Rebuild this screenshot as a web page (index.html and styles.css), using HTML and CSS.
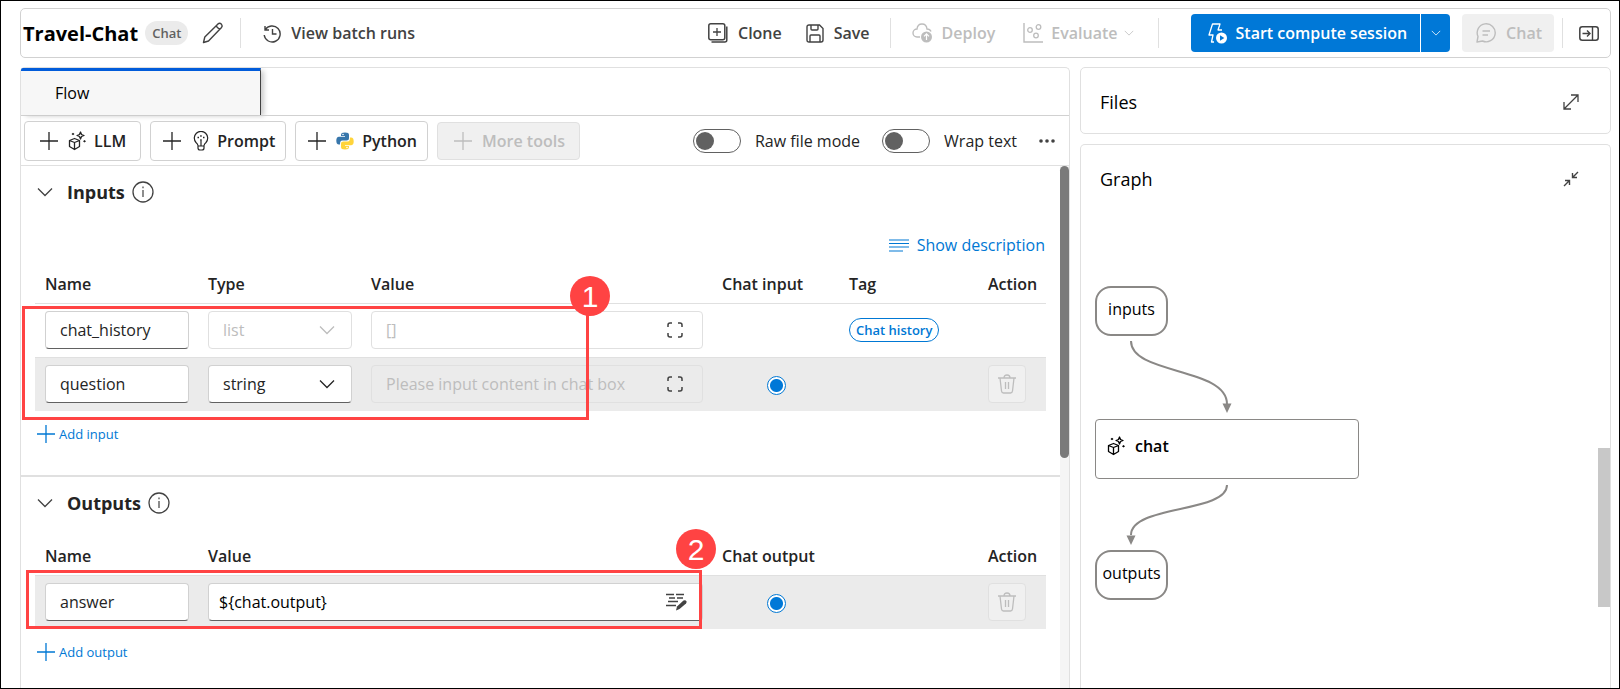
FILE: index.html
```html
<!DOCTYPE html>
<html lang="en">
<head>
<meta charset="utf-8">
<title>Travel-Chat</title>
<link rel="stylesheet" href="styles.css">
</head>
<body>
<svg class="defs" aria-hidden="true">
  <symbol id="plus" viewBox="0 0 18 18"><path d="M9 0v18M0 9h18" fill="none" stroke="currentColor" stroke-width="1.3"/></symbol>
  <symbol id="chevron" viewBox="0 0 16 10"><path d="M1 1.5l7 7 7-7" fill="none" stroke="currentColor" stroke-width="1.3"/></symbol>
  <symbol id="llm" viewBox="0 0 18 20"><g fill="none" stroke="currentColor" stroke-width="1.3" stroke-linejoin="round"><path d="M6.500 7.500l5 2v6l-5 3-5-3v-6zM1.500 9.500l5 2 5-2M6.500 11.500v7"/><path d="M12.500 1l1 2.500 2.500 1-2.500 1-1 2.500-1-2.500-2.500-1 2.500-1z"/></g><path d="M5 1.700l1.500 1.300L5 4.300 3.500 3zM16.500 9l1.500 1.300-1.500 1.300-1.500-1.300z" fill="currentColor"/></symbol>
  <symbol id="info" viewBox="0 0 22 22"><circle cx="11" cy="11" r="10" fill="none" stroke="currentColor" stroke-width="1.3"/><path d="M11 9v7M11 5.500v1.700" stroke="currentColor" stroke-width="1.200"/></symbol>
  <symbol id="expand" viewBox="0 0 16 16"><path d="M1 5V3q0-2 2-2h2M11 1h2q2 0 2 2v2M15 11v2q0 2-2 2h-2M5 15H3q-2 0-2-2v-2" fill="none" stroke="currentColor" stroke-width="1.500"/></symbol>
  <symbol id="trash" viewBox="0 0 20 20"><path d="M1 4h18M7 4q0-3 3-3t3 3M3 4l1.500 13q.3 2 2 2h7q1.700 0 2-2L17 4M8.500 8v7M11.500 8v7" fill="none" stroke="currentColor" stroke-width="1.300"/></symbol>
</svg>
<div class="page">
  <header class="topbar">
    <h1>Travel-Chat</h1>
    <span class="pill">Chat</span>
    <button class="ghost edit" aria-label="Rename"><svg width="22" height="22" viewBox="0 0 22 22"><path d="M1.500 20.500l1.300-5.500L16 1.900q1.700-1.300 3.300.2 1.500 1.700.2 3.300L6.500 19zM14 4l3.800 3.800" fill="none" stroke="currentColor" stroke-width="1.400" stroke-linejoin="round"/></svg></button>
    <i class="rule"></i>
    <button class="ghost history"><svg width="18" height="20" viewBox="0 0 18 20"><path d="M2 3v4h4M2.200 7A8 8 0 1 1 1.200 12M9.500 6v5h4" fill="none" stroke="currentColor" stroke-width="1.400"/></svg>View batch runs</button>
    <div class="actions">
      <button class="ghost"><svg width="20" height="20" viewBox="0 0 20 20"><rect x=".8" y=".8" width="16" height="16" rx="2" fill="none" stroke="currentColor" stroke-width="1.500"/><path d="M9 5v8M5 9h8" stroke="currentColor" stroke-width="1.300"/><path d="M18.800 3.500V17q0 2-2 2H3.500" fill="none" stroke="currentColor" stroke-width="1.500"/></svg>Clone</button>
      <button class="ghost save"><svg width="18" height="19" viewBox="0 0 18 19"><path d="M3 1h10.500L17 4.500V16q0 2-2 2H3q-2 0-2-2V3q0-2 2-2zM4 18v-6q0-1 1-1h8q1 0 1 1v6M5 1v4q0 1 1 1h5q1 0 1-1V1" fill="none" stroke="currentColor" stroke-width="1.400"/></svg>Save</button>
      <i class="rule"></i>
      <button class="ghost deploy" disabled><svg width="20" height="20" viewBox="0 0 20 20"><path d="M8 14H5a4 4 0 0 1 0-8Q5.500 1 10 1t5 5q3 0 4 2.500" fill="none" stroke="currentColor" stroke-width="1.400"/><circle cx="14.500" cy="14" r="5.500" fill="currentColor"/><path d="M14.500 17v-6M12 13.300l2.500-2.500 2.500 2.500" fill="none" stroke="#fff" stroke-width="1.200"/></svg>Deploy</button>
      <button class="ghost evaluate" disabled><svg width="20" height="20" viewBox="0 0 20 20"><path d="M1 0v19h19" fill="none" stroke="currentColor" stroke-width="1.400"/><g fill="none" stroke="currentColor" stroke-width="1.300"><circle cx="7" cy="7" r="2.300"/><circle cx="15.500" cy="4" r="2.300"/><circle cx="13" cy="12.500" r="2.300"/></g></svg>Evaluate<svg class="caret" width="10" height="6"><use href="#chevron"/></svg></button>
      <i class="rule"></i>
      <div class="split">
        <button class="start"><svg width="20" height="21" viewBox="0 0 20 21"><path d="M6 19H3.500L5 12H1L4.500 1H12l-2 6h4" fill="none" stroke="currentColor" stroke-width="1.300" stroke-linejoin="round"/><circle cx="13.500" cy="15" r="5.500" fill="currentColor"/><path d="M12 12.300v5.400l4.300-2.700z" fill="#0078d7"/></svg>Start compute session</button>
        <button class="more" aria-label="Session options"><svg width="10" height="6"><use href="#chevron"/></svg></button>
      </div>
      <button class="chat-button" disabled><svg width="20" height="20" viewBox="0 0 20 20"><path d="M1 19l1-5.500A9 9 0 1 1 6.500 18z" fill="none" stroke="currentColor" stroke-width="1.400" stroke-linejoin="round"/><path d="M6.500 8h7.500M6.500 12H12" stroke="currentColor" stroke-width="1.300"/></svg>Chat</button>
      <i class="rule"></i>
      <button class="ghost collapse" aria-label="Toggle panel"><svg width="20" height="15" viewBox="0 0 20 15"><rect x=".8" y=".8" width="18.400" height="13.400" rx="2.500" fill="none" stroke="currentColor" stroke-width="1.500"/><path d="M13.500 1v13M3.500 7.500h7M8 4.500l3 3-3 3" fill="none" stroke="currentColor" stroke-width="1.400"/></svg></button>
    </div>
  </header>
  <div class="columns">
    <main class="panel editor">
      <div class="tabs"><button class="tab">Flow</button></div>
      <div class="tools">
        <button class="tool tool-llm"><svg class="plus" width="18" height="18"><use href="#plus"/></svg><svg width="18" height="20"><use href="#llm"/></svg>LLM</button>
        <button class="tool"><svg class="plus" width="18" height="18"><use href="#plus"/></svg><svg class="bulb" width="16" height="20" viewBox="0 0 16 20"><path d="M5 14.500Q4.700 13 3 11.500A6.700 6.700 0 1 1 13 11.500Q11.300 13 11 14.500V17q0 2-2 2H7q-2 0-2-2zM5 15h6M8 9.500V15" fill="none" stroke="currentColor" stroke-width="1.200"/><path d="M4.500 6.500h1.500M7.200 5h1.500M10 6.500h1.500M7.200 9h1.500" stroke="currentColor" stroke-width="1.500"/></svg>Prompt</button>
        <button class="tool"><svg class="plus" width="18" height="18"><use href="#plus"/></svg><svg width="18" height="18" viewBox="0 0 18 18"><path d="M9 .5c3 0 4 .8 4 2.500v3c0 1.800-1 2.500-2.500 2.500h-4C4.500 8.500 4 10 4 12.500H3C1 12.500.3 11 .3 8.500S1.300 4.700 3 4.700h6V4H5V3C5 1.300 6 .5 9 .5z" fill="#3776ab"/><path d="M9 17.500c-3 0-4-.8-4-2.500v-3c0-1.800 1-2.500 2.500-2.500h4C13.500 9.500 14 8 14 5.500h1c2 0 2.700 1.500 2.700 4s-1 3.800-2.700 3.800H9v.7h4v1c0 1.700-1 2.500-4 2.500z" fill="#ffd43b"/><circle cx="7" cy="2.500" r=".8" fill="#fff"/><circle cx="11" cy="15.500" r=".8" fill="#fff"/></svg>Python</button>
        <button class="tool tool-more" disabled><svg class="plus" width="18" height="18"><use href="#plus"/></svg>More tools</button>
        <div class="view">
          <label><input type="checkbox" class="toggle">Raw file mode</label>
          <label><input type="checkbox" class="toggle">Wrap text</label>
          <button class="ghost" aria-label="More options"><svg width="16" height="4" viewBox="0 0 16 4"><g fill="currentColor"><circle cx="2" cy="2" r="1.800"/><circle cx="8" cy="2" r="1.800"/><circle cx="14" cy="2" r="1.800"/></g></svg></button>
        </div>
      </div>
      <div class="body">
        <div class="sections">
          <section>
            <h2><svg width="16" height="10"><use href="#chevron"/></svg>Inputs<svg class="info" width="22" height="22"><use href="#info"/></svg></h2>
            <div class="describe"><button class="link"><svg width="20" height="13" viewBox="0 0 20 13"><path d="M0 1h20M0 4.500h20M0 8h20M0 12h14" stroke="currentColor" stroke-width="1.200"/></svg>Show description</button></div>
            <table>
              <colgroup><col class="c-name"><col class="c-name"><col><col class="c-chat"><col class="c-tag"><col class="c-action"></colgroup>
              <thead><tr><th>Name</th><th>Type</th><th>Value</th><th>Chat input</th><th>Tag</th><th>Action</th></tr></thead>
              <tbody>
                <tr>
                  <td><input class="field" aria-label="Name" value="chat_history"></td>
                  <td><div class="select"><select class="field" aria-label="Type" disabled><option>list</option></select><svg width="16" height="10"><use href="#chevron"/></svg></div></td>
                  <td><div class="value"><input class="field" aria-label="Value" value="[]" disabled><button class="ghost" aria-label="Expand"><svg width="16" height="16"><use href="#expand"/></svg></button></div></td>
                  <td></td>
                  <td><span class="tag">Chat history</span></td>
                  <td></td>
                </tr>
                <tr class="shaded">
                  <td><input class="field" aria-label="Name" value="question"></td>
                  <td><div class="select"><select class="field" aria-label="Type"><option>string</option></select><svg width="16" height="10"><use href="#chevron"/></svg></div></td>
                  <td><div class="value"><input class="field" aria-label="Value" placeholder="Please input content in chat box" disabled><button class="ghost" aria-label="Expand"><svg width="16" height="16"><use href="#expand"/></svg></button></div></td>
                  <td class="center"><input type="radio" name="chat-input" aria-label="Chat input" checked></td>
                  <td></td>
                  <td><button class="delete" aria-label="Delete" disabled><svg width="20" height="20"><use href="#trash"/></svg></button></td>
                </tr>
              </tbody>
            </table>
            <button class="link add"><svg width="18" height="18"><use href="#plus"/></svg>Add input</button>
            <div class="callout callout-inputs"></div>
            <span class="badge badge-inputs">1</span>
          </section>
          <section>
            <h2><svg width="16" height="10"><use href="#chevron"/></svg>Outputs<svg class="info" width="22" height="22"><use href="#info"/></svg></h2>
            <table class="outputs">
              <colgroup><col class="c-name"><col><col class="c-chat"><col class="c-tag"><col class="c-action"></colgroup>
              <thead><tr><th>Name</th><th>Value</th><th>Chat output</th><th></th><th>Action</th></tr></thead>
              <tbody>
                <tr class="shaded">
                  <td><input class="field" aria-label="Name" value="answer"></td>
                  <td><div class="value"><input class="field reference" aria-label="Value" value="${chat.output}"><button class="ghost" aria-label="Edit value"><svg width="22" height="18" viewBox="0 0 22 18"><path d="M1 1.500h8M11 1.500h8M4 5h6M12 5h6M3 8.500h10M1 12.500h10" stroke="currentColor" stroke-width="1.400"/><path d="M11 17.500l1-4 6.500-6q2-1 3 1 .3 1-.5 2L14.500 16z" fill="currentColor"/></svg></button></div></td>
                  <td class="center"><input type="radio" name="chat-output" aria-label="Chat output" checked></td>
                  <td></td>
                  <td><button class="delete" aria-label="Delete" disabled><svg width="20" height="20"><use href="#trash"/></svg></button></td>
                </tr>
              </tbody>
            </table>
            <button class="link add"><svg width="18" height="18"><use href="#plus"/></svg>Add output</button>
            <div class="callout callout-outputs"></div>
            <span class="badge badge-outputs">2</span>
          </section>
        </div>
        <div class="scrollbar"><div class="thumb"></div></div>
      </div>
    </main>
    <aside>
      <section class="panel files"><h3>Files</h3><button class="ghost" aria-label="Expand files"><svg width="16" height="16" viewBox="0 0 16 16"><path d="M8 1h7v7M1 8v7h7M1 15L15 1" fill="none" stroke="currentColor" stroke-width="1.300"/></svg></button></section>
      <section class="panel graph">
        <div class="graph-head"><h3>Graph</h3><button class="ghost" aria-label="Collapse graph"><svg width="16" height="16" viewBox="0 0 16 16"><path d="M15 1l-5 5M9.500 2v4.500H14M1 15l5-5M2 9.500h4.500V14" fill="none" stroke="currentColor" stroke-width="1.400"/></svg></button></div>
        <div class="canvas">
          <svg class="edges" width="270" height="320" viewBox="0 0 270 320"><g fill="none" stroke="#8a8886" stroke-width="2"><path d="M36 55C36 89 132 81 132 118"/><path d="M132 199C132 227 36 219 36 249"/></g><path d="M127.500 117.500h9L132 127zM31.500 249.500h9L36 259z" fill="#8a8886"/></svg>
          <div class="node port node-inputs">inputs</div>
          <div class="node node-chat"><svg width="18" height="20"><use href="#llm"/></svg>chat</div>
          <div class="node port node-outputs">outputs</div>
        </div>
        <div class="graph-thumb"></div>
      </section>
    </aside>
  </div>
</div>
</body>
</html>
```
FILE: styles.css
```css
* { box-sizing: border-box; }
body {
  margin: 0;
  font: 16px/20px "Open Sans", "Noto Sans", sans-serif;
  color: #242424;
  background: #fff;
}
.defs { position: absolute; width: 0; height: 0; }
svg { display: block; flex: none; }
button, input, select { font: inherit; color: inherit; margin: 0; }
button { display: flex; align-items: center; padding: 0; border: 0; background: none; white-space: nowrap; }
h1, h2, h3 { margin: 0; color: #000; }
.ghost { color: #424242; font-weight: 600; gap: 10px; }
.ghost:disabled { color: #bdbdbd; }

.page {
  display: flex;
  flex-direction: column;
  gap: 9px;
  min-height: 100vh;
  padding: 7px 8px 0 19px;
  border: 1px solid #000;
}
.panel { border: 1px solid #e0e0e0; border-radius: 5px; }

.topbar {
  display: flex;
  align-items: center;
  height: 50px;
  padding: 0 11px 0 2px;
  border: 1px solid #d1d1d1;
  border-radius: 5px;
}
h1 { padding-top: 2px; font-size: 20px; line-height: 28px; font-weight: 700; }
.pill {
  margin-left: 7px;
  padding: 2px 7px;
  border-radius: 12px;
  background: #ebebeb;
  color: #616161;
  font-size: 13px;
  font-weight: 600;
}
.edit { margin-left: 14px; }
.rule { width: 1px; height: 30px; background: #e0e0e0; }
.edit + .rule { margin: 0 22px 0 16px; }
.actions { display: flex; align-items: center; margin-left: auto; }
.save { margin: 0 20px 0 24px; }
.deploy { margin: 0 28px 0 21px; }
.evaluate { gap: 8px; margin-right: 24px; }
.caret { margin-left: -2px; }
.split { display: flex; height: 38px; margin: 0 12px 0 32px; color: #fff; }
.start, .more { background: #0078d7; }
.start { gap: 8px; padding: 0 13px 0 17px; border-radius: 4px 0 0 4px; font-weight: 600; }
.more { justify-content: center; width: 29px; margin-left: 1px; border-radius: 0 4px 4px 0; }
.chat-button {
  gap: 10px;
  height: 38px;
  margin-right: 8px;
  padding: 0 12px 0 14px;
  border-radius: 4px;
  background: #f0f0f0;
  color: #bdbdbd;
  font-weight: 600;
}
.collapse { margin-left: 16px; }

.columns { flex: 1; display: grid; grid-template-columns: minmax(0, 1050fr) minmax(0, 531fr); gap: 10px; }
.editor, .graph { border-bottom: 0; border-bottom-left-radius: 0; border-bottom-right-radius: 0; }
.editor { display: flex; flex-direction: column; }
.tabs { display: flex; height: 48px; border-bottom: 1px solid #d1d1d1; }
.tab {
  width: 240px;
  padding: 0 34px;
  border-top: 3px solid #015cda;
  border-right: 1px solid #424242;
  border-radius: 2px 0 0 0;
  background: #f7f7f7;
  box-shadow: 4px 2px 5px -1px #ccc;
  color: #000;
}
.tools { display: flex; align-items: center; gap: 9px; height: 50px; padding: 0 14px 0 3px; border-bottom: 1px solid #e0e0e0; }
.tool {
  gap: 8px;
  height: 40px;
  padding: 0 10px 0 12px;
  border: 1px solid #d1d1d1;
  border-radius: 4px;
  background: #fff;
  font-weight: 600;
}
.tool-llm { padding: 0 14px 0 15px; }
.tool-more { padding: 0 14px 0 16px; }
.plus { margin-right: 2px; }
.bulb { margin-left: 2px; }
.tool:disabled { height: 38px; background: #f0f0f0; border-color: #e0e0e0; color: #bdbdbd; }
.view { display: flex; align-items: center; gap: 22px; margin-left: auto; }
.view label { display: flex; align-items: center; gap: 14px; white-space: nowrap; }
.toggle {
  appearance: none;
  width: 48px;
  height: 24px;
  padding: 2px;
  border: 1px solid #616161;
  border-radius: 12px;
}
.toggle::before { content: ""; display: block; width: 18px; height: 18px; border-radius: 9px; background: #616161; }

.body { flex: 1; display: flex; }
.sections { flex: 1; min-width: 0; }
.sections section { position: relative; }
.sections section + section { margin-top: 18px; border-top: 2px solid #e0e0e0; }
h2 { display: flex; align-items: center; height: 52px; padding-left: 16px; font-size: 18px; font-weight: 700; color: #242424; }
h2 svg { color: #424242; margin-right: 14px; }
h2 .info { margin: 0 0 0 7px; }
.link { gap: 8px; color: #0078d4; }
.describe { display: flex; justify-content: flex-end; height: 47px; padding: 7px 15px 0 0; }
table { width: calc(100% - 28px); margin-left: 14px; border-collapse: collapse; table-layout: fixed; }
.outputs { margin-top: 8px; }
.c-name { width: 163px; }
.c-chat { width: 127px; }
.c-tag { width: 139px; }
.c-action { width: 68px; }
th { height: 38px; padding: 0 0 0 10px; text-align: left; font-weight: 600; white-space: nowrap; }
tbody tr { border-top: 1px solid #e0e0e0; }
td { height: 54px; padding: 0 9px 0 10px; }
.shaded { background: #ebebeb; }
.center { text-align: center; }
.field {
  display: block;
  width: 100%;
  height: 38px;
  padding: 0 14px;
  border: 1px solid #d1d1d1;
  border-bottom-color: #616161;
  border-radius: 4px;
  background: #fff;
}
.field:disabled { border-color: #e0e0e0; background: transparent; color: #bdbdbd; opacity: 1; }
.field::placeholder { color: #bdbdbd; opacity: 1; }
.reference { padding-left: 10px; color: #000; }
.select { display: grid; align-items: center; color: #242424; }
.select select { appearance: none; grid-area: 1 / 1; }
.select svg { grid-area: 1 / 1; justify-self: end; margin-right: 17px; pointer-events: none; }
.select select:disabled + svg { color: #bdbdbd; }
.value { display: grid; align-items: center; }
.value .field { grid-area: 1 / 1; }
.value button { grid-area: 1 / 1; justify-self: end; margin-right: 20px; }
.value .reference + button { margin-right: 16px; }
.tag {
  display: inline-block;
  height: 24px;
  padding: 1px 6px;
  border: 1px solid #0078d4;
  border-radius: 12px;
  color: #0078d4;
  font-size: 13px;
  font-weight: 600;
  white-space: nowrap;
}
input[type="radio"] {
  appearance: none;
  display: inline-block;
  width: 19px;
  height: 19px;
  border: 1px solid #0078d4;
  border-radius: 50%;
  background: radial-gradient(circle, #0078d7 6px, #fff 7px);
  vertical-align: middle;
}
.delete {
  justify-content: center;
  width: 38px;
  height: 38px;
  border: 1px solid #e0e0e0;
  border-radius: 4px;
  background: #f0f0f0;
  color: #bdbdbd;
}
.add { gap: 4px; height: 46px; margin-left: 16px; font-size: 13px; }
.callout { position: absolute; border: 3px solid #ff4343; pointer-events: none; }
.callout-inputs { left: 1px; top: 140px; width: 567px; height: 114px; }
.callout-outputs { left: 5px; top: 93px; width: 676px; height: 59px; }
.badge {
  position: absolute;
  width: 40px;
  height: 40px;
  border-radius: 50%;
  background: #ff4343;
  color: #fff;
  font: 30px/42px "Liberation Sans", Arial, sans-serif;
  text-align: center;
}
.badge-inputs { left: 549px; top: 110px; }
.badge-outputs { left: 655px; top: 52px; }
.scrollbar { width: 9px; background: #f5f5f5; }
.thumb { height: 292px; border-radius: 5px; background: #7a7a7a; }

aside { display: flex; flex-direction: column; gap: 10px; }
h3 { font-size: 18px; line-height: 24px; font-weight: 500; }
.files, .graph-head { display: flex; align-items: center; justify-content: space-between; padding: 0 31px 0 19px; }
.files { height: 67px; padding-top: 2px; }
.graph { position: relative; flex: 1; display: flex; flex-direction: column; }
.graph-head { height: 68px; }
.canvas { position: relative; flex: 1; margin: 73px 0 0 14px; color: #000; }
.edges { position: absolute; left: 0; top: 0; }
.node { position: absolute; left: 0; border: 1px solid #8a8886; border-radius: 4px; background: #fff; }
.port { width: 73px; height: 50px; padding-top: 11px; border-width: 2px; border-radius: 16px; text-align: center; }
.node-inputs { top: 0; }
.node-chat { top: 133px; width: 264px; height: 60px; display: flex; gap: 10px; padding: 16px 11px; font-weight: 600; }
.node-outputs { top: 264px; }
.graph-thumb { position: absolute; right: 0; top: 303px; width: 12px; height: 159px; background: #c8c8c8; }
```
